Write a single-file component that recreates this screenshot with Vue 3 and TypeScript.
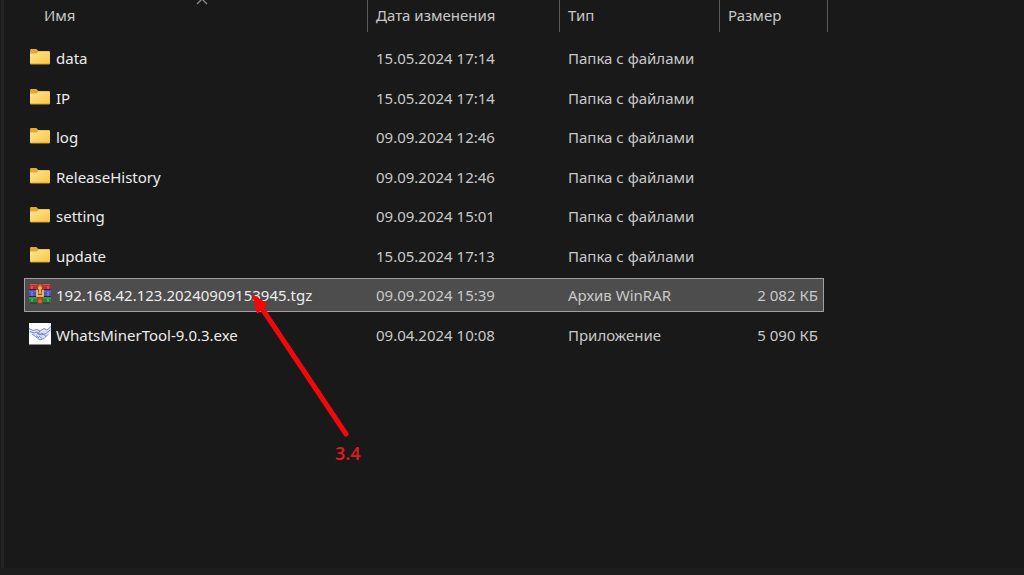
<script setup lang="ts">
type Kind = 'folder' | 'archive' | 'app'

interface Entry {
  name: string
  date: string
  type: string
  size: string
  kind: Kind
}

const columns: string[] = ['Имя', 'Дата изменения', 'Тип', 'Размер']

const folder = (name: string, date: string): Entry => ({
  name,
  date,
  type: 'Папка с файлами',
  size: '',
  kind: 'folder',
})

const entries: Entry[] = [
  folder('data', '15.05.2024 17:14'),
  folder('IP', '15.05.2024 17:14'),
  folder('log', '09.09.2024 12:46'),
  folder('ReleaseHistory', '09.09.2024 12:46'),
  folder('setting', '09.09.2024 15:01'),
  folder('update', '15.05.2024 17:13'),
  { name: '192.168.42.123.20240909153945.tgz', date: '09.09.2024 15:39', type: 'Архив WinRAR', size: '2 082 КБ', kind: 'archive' },
  { name: 'WhatsMinerTool-9.0.3.exe', date: '09.04.2024 10:08', type: 'Приложение', size: '5 090 КБ', kind: 'app' },
]

const selected = '192.168.42.123.20240909153945.tgz'
</script>

<template>
  <main class="explorer">
    <svg class="defs" width="0" height="0" aria-hidden="true">
      <defs>
        <linearGradient id="folder-front" x1="0" y1="0" x2="1" y2="1">
          <stop offset="0" stop-color="#ffe595" />
          <stop offset="1" stop-color="#f8c544" />
        </linearGradient>
      </defs>
    </svg>
    <section class="pane">
      <table class="files">
        <thead>
          <tr>
            <th v-for="(column, i) in columns" :key="column" scope="col">
              <button type="button" class="sort">{{ column }}</button>
              <svg v-if="i === 0" class="caret" viewBox="0 0 12 6" aria-hidden="true">
                <path d="M1 5 6 0l5 5" fill="none" stroke="#8c8c8c" stroke-width="1.3" />
              </svg>
            </th>
          </tr>
        </thead>
        <tbody>
          <tr v-for="entry in entries" :key="entry.name" :class="{ selected: entry.name === selected }">
            <td>
              <div class="name">
                <svg v-if="entry.kind === 'folder'" class="icon" viewBox="0 0 22 22" aria-hidden="true">
                  <path d="M1 4.2Q1 3 2.2 3H7.4L9.4 5H19.8Q21 5 21 6.2V10H1Z" fill="#e2a92c" />
                  <path d="M1 7.4H7.6L9.6 5.6H19.8Q21 5.6 21 6.8V17.2Q21 18.2 20 18.2H2Q1 18.2 1 17.2Z" fill="url(#folder-front)" />
                  <path d="M1.3 17.8H20.7" stroke="#dfa431" stroke-width=".8" />
                </svg>
                <svg v-else-if="entry.kind === 'archive'" class="icon" viewBox="0 0 22 22" aria-hidden="true">
                  <path d="M1 1H21L22 3V7H0V3Z" fill="#c22a36" />
                  <path d="M0 7H22V14H0Z" fill="#4a55c0" />
                  <path d="M0 14H22V19L21 20.5H1L0 19Z" fill="#27823c" />
                  <path d="M1 1.6H21" stroke="#d9534f" />
                  <path d="M0 8H22" stroke="#7b7fd6" />
                  <path d="M0 15H22" stroke="#4fa65c" />
                  <path d="M0 6.7H22M0 13.5H22M1 20H21" stroke="#33203f" stroke-width="1.2" />
                  <path d="M3 3V6M19 3V6" stroke="#e58a6c" />
                  <path d="M3 9V13M19 9V13" stroke="#8b9be8" />
                  <path d="M3 16V19M19 16V19" stroke="#6fc474" />
                  <path d="M8 1H14V20.5H8Z" fill="#a5431c" />
                  <path d="M9.5 1.5H12.5V4.5H9.5ZM9.5 16.5H12.5V20H9.5Z" fill="#df6a2b" />
                  <path d="M7 6H15V14.5H7Z" fill="#8a5329" />
                  <path d="M8 7V13H14V7M11 4.5V9" fill="none" stroke="#f6cc78" stroke-width="1.6" />
                  <path d="M9 4.5Q11 2 13 4.5V6H9Z" fill="#f0b44c" />
                  <path d="M9.5 10H12.5" stroke="#f5c56b" stroke-width="1.4" />
                </svg>
                <svg v-else class="icon" viewBox="0 0 22 22" aria-hidden="true">
                  <path d="M0 0H22V21.5H0Z" fill="#fbfcff" />
                  <path d="M0 6 4 7.5 8 6.5 11 8 15 5.5 18 7 22 4V9L18 13 14 16 11 17 7 14 4 12 0 10Z" fill="#dbe2f8" />
                  <path
                    d="M0 5.5 4 7.5 8 6.5 11 8 15 5.5 18 7 22 3.5M1 8.5 5 10 8 9 12 12 17 10.5 21 7M3 11 7 14 11 17 15 15.5 19 11.5M11 8 8.5 11 11 11.5 13 10 17 13.5M7 12.5 10 15M10 13 13 15.5"
                    fill="none"
                    stroke="#5a70c4"
                    stroke-width=".8"
                  />
                </svg>
                <span>{{ entry.name }}</span>
              </div>
            </td>
            <td>{{ entry.date }}</td>
            <td>{{ entry.type }}</td>
            <td class="size">{{ entry.size }}</td>
          </tr>
        </tbody>
      </table>
      <svg class="arrow" viewBox="0 0 98 144" aria-hidden="true">
        <path d="M12 16 95 140" stroke="#f0080b" stroke-width="5" stroke-linecap="round" />
        <path d="M1 0 17 10 6 20Z" fill="#f90508" />
      </svg>
      <span class="step">3.4</span>
    </section>
    <footer class="status"></footer>
  </main>
</template>

<style>
html,
body {
  margin: 0;
  background: #191919;
}
</style>

<style scoped>
.explorer {
  display: flex;
  flex-direction: column;
  min-height: 100vh;
  overflow: hidden;
  background: #191919;
  color: #c8c8c8;
  font: 15px/20px 'Noto Sans', 'Open Sans', sans-serif;
}

.defs {
  position: absolute;
}

.pane {
  position: relative;
  flex: 1;
  margin-left: 1px;
  padding-left: 20px;
  border-left: 3px solid #242424;
}

.files {
  width: 80%;
  margin-top: -6px;
  table-layout: fixed;
  border-collapse: separate;
  border-spacing: 0 6px;
}

th {
  position: relative;
  height: 35px;
  padding: 0;
  font-weight: 400;
  text-align: left;
  vertical-align: top;
}

th:nth-child(1) {
  width: 43%;
}

th:nth-child(2) {
  width: 24%;
}

th:nth-child(3) {
  width: 20%;
}

th::after {
  content: '';
  position: absolute;
  top: 0;
  right: 0;
  width: 1px;
  height: 32px;
  background: #5c5c5c;
}

th:last-child::after {
  right: -4px;
}

.sort {
  display: block;
  width: 100%;
  height: 32px;
  padding: 0 8px 2px;
  border: 0;
  background: none;
  color: #c8c8c8;
  font: inherit;
  text-align: left;
}

th:first-child .sort {
  padding-left: 20px;
}

.caret {
  position: absolute;
  top: -1px;
  left: 50%;
  width: 12px;
  height: 6px;
}

td {
  box-sizing: border-box;
  height: 34px;
  padding: 0 8px;
  border: solid transparent;
  border-width: 1px 0;
  white-space: nowrap;
}

tr:nth-child(even) td {
  height: 33px;
}

td:first-child {
  padding-left: 4px;
  border-left-width: 1px;
  color: #ececec;
}

td:last-child {
  padding-right: 5px;
  border-right-width: 1px;
}

.size {
  text-align: right;
}

.selected td {
  background: #4d4d4d;
  border-color: #a0a0a0;
}

.name {
  display: flex;
  align-items: center;
  gap: 5px;
}

.icon {
  flex: none;
  width: 22px;
  height: 22px;
  margin-bottom: 2px;
}

.arrow {
  position: absolute;
  top: 294px;
  left: 247px;
  width: 98px;
  height: 144px;
}

.step {
  position: absolute;
  top: 441px;
  left: 331px;
  color: #dc1b20;
  font-size: 18px;
  font-weight: 600;
  line-height: 24px;
}

.status {
  height: 7px;
  background: #1d1d1d;
}
</style>
